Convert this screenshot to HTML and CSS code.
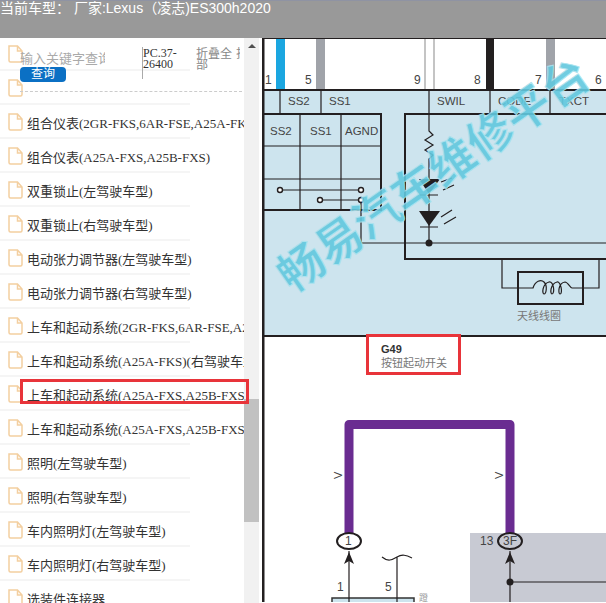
FILE: index.html
```html
<!DOCTYPE html>
<html>
    <head>
        <meta name="viewport" content="width=device-width, initial-scale=1">
        <link rel="stylesheet" href="styles.css">
    </head>
    <body>
        <div class="top_bar">当前车型： 厂家:Lexus（凌志)ES300h2020</div>

        <div class="main">
            <!-- Left tree of circuit names -->
            <div class="side">
                <ul id="circuitList" class="circuit_list"></ul>

                <div class="search_box">
                    <div class="search_left">
                        <div class="search_input">输入关键字查询</div>
                        <button class="search_btn">查询</button>
                    </div>
                    <div class="search_code">PC.37-26400</div>
                    <div class="search_fold">折叠全部</div>
                    <div class="search_more">折</div>
                </div>

                <div class="red_mark"></div>

                <div class="scroll_track">
                    <div class="scroll_up"></div>
                    <div class="scroll_thumb"></div>
                </div>
            </div>

            <!-- Circuit diagram -->
            <svg class="diagram" viewBox="262 39 344 564" width="344" height="564">
                <rect x="262" y="39" width="344" height="564" fill="#fff"/>

                <!-- wires coming in from above -->
                <rect x="276" y="39" width="9" height="52" fill="#1ba6e0"/>
                <rect x="316" y="39" width="9" height="52" fill="#a0a3a9"/>
                <rect x="424" y="39" width="2" height="52" fill="#c4c4c4"/>
                <rect x="433" y="39" width="2" height="52" fill="#c4c4c4"/>
                <rect x="486" y="39" width="8" height="52" fill="#231f20"/>
                <rect x="546" y="39" width="9" height="52" fill="#a0a3a9"/>
                <g class="pin_text">
                    <text x="265" y="85">1</text>
                    <text x="305" y="85">5</text>
                    <text x="414" y="85">9</text>
                    <text x="474" y="85">8</text>
                    <text x="535" y="85">7</text>
                    <text x="595" y="85">6</text>
                </g>

                <!-- blue block -->
                <rect x="264" y="91" width="342" height="246" fill="#cde4ee"/>
                <g class="line_thick">
                    <path d="M264 91H606"/>
                    <path d="M264 337H606"/>
                    <path d="M264 115H381V211H264"/>
                    <path d="M606 115H405V260H606"/>
                </g>
                <g class="line">
                    <path d="M280 91V115M321 91V115M429 91V115M490 91V115M550 91V115"/>
                    <path d="M300 115V211M341 115V211M264 147H381M264 180H381"/>
                    <path d="M283 191H358M323 201H358"/>
                    <path d="M361 204V244H606"/>
                    <path d="M429 115V132L433 136 425 141 433 146 425 151 433 156 429 160V244"/>
                    <path d="M502 260V289H518M583 289H599V260"/>
                    <path d="M420 196H438M420 228H438"/>
                    <path d="M441 183L452 179M443 191L454 186M441 218L452 211M444 225L456 218"/>
                </g>
                <g class="pin_hole">
                    <circle cx="280" cy="191" r="2.5"/>
                    <circle cx="361" cy="191" r="2.5"/>
                    <circle cx="320" cy="201" r="2.5"/>
                    <circle cx="361" cy="201" r="2.5"/>
                </g>
                <path d="M419 180H440L429 195Z" fill="#231f20"/>
                <path d="M419 212H440L429 227Z" fill="#231f20"/>
                <circle cx="429" cy="244" r="3.5" fill="#231f20"/>

                <g class="box_text">
                    <text x="288" y="106">SS2</text>
                    <text x="329" y="106">SS1</text>
                    <text x="437" y="106">SWIL</text>
                    <text x="498" y="106">CODE</text>
                    <text x="559" y="106">TXCT</text>
                    <text x="270" y="136">SS2</text>
                    <text x="310" y="136">SS1</text>
                    <text x="345" y="136">AGND</text>
                </g>

                <!-- antenna coil -->
                <rect x="518" y="273" width="65" height="32" class="line_thick"/>
                <path class="line" d="M518 289H533C535 282 541 280 544 283 548 287 546 295 544 295 542 295 542 285 549 283 554 282 555 295 552 295 550 295 550 285 557 283 561 282 563 295 560 295 558 295 558 284 565 283 568 283 570 289 572 289H583"/>
                <text x="517" y="321" class="cn_text">天线线圈</text>

                <!-- connector name -->
                <text x="381" y="354" class="conn_name">G49</text>
                <text x="381" y="368" class="cn_text">按钮起动开关</text>
                <rect x="367.5" y="336.5" width="92" height="38" class="red_box"/>

                <!-- purple wire -->
                <path class="wire_purple" d="M349 534V425.500H510V534"/>
                <g class="wire_letter">
                    <text transform="translate(342 480) rotate(-90)">V</text>
                    <text transform="translate(503 480) rotate(-90)">V</text>
                </g>

                <!-- lower connectors -->
                <rect x="470" y="534" width="136" height="69" fill="#c8cad3"/>
                <rect x="332" y="599" width="82" height="6" fill="#cde4ee" stroke="#333" stroke-width="1.500"/>
                <path class="line" d="M349 552V603M510 552V603M510 583H606M397 558V603M382 558C388 563 392 561 397 558 402 555 406 556 412 559"/>
                <circle cx="510" cy="583" r="3.500" fill="#231f20"/>
                <path d="M349 553L354 565 349 562 344 565Z" fill="#231f20"/>
                <path d="M510 553L515 565 510 562 505 565Z" fill="#231f20"/>
                <ellipse cx="349" cy="542" rx="12" ry="8" fill="#fff" stroke="#231f20" stroke-width="2"/>
                <ellipse cx="510" cy="542" rx="12" ry="8" fill="#c8cad3" stroke="#231f20" stroke-width="2"/>
                <g class="pin_text">
                    <text x="345" y="546">1</text>
                    <text x="503" y="546">3F</text>
                    <text x="480" y="546">13</text>
                    <text x="337" y="592">1</text>
                    <text x="385" y="592">5</text>
                </g>
                <text x="419" y="602" class="cn_small">蹬</text>

                <!-- watermark -->
                <text class="watermark" transform="translate(292 295) rotate(-35)">畅易汽车维修平台</text>

                <rect x="262" y="39" width="2.500" height="564" fill="#231f20"/>
                <rect x="262" y="39" width="344" height="1" fill="#231f20"/>
            </svg>
        </div>

        <script>
            var names = [
                "",
                "",
                "组合仪表(2GR-FKS,6AR-FSE,A25A-FKS)",
                "组合仪表(A25A-FXS,A25B-FXS)",
                "双重锁止(左驾驶车型)",
                "双重锁止(右驾驶车型)",
                "电动张力调节器(左驾驶车型)",
                "电动张力调节器(右驾驶车型)",
                "上车和起动系统(2GR-FKS,6AR-FSE,A25A-FKS)",
                "上车和起动系统(A25A-FKS)(右驾驶车型)",
                "上车和起动系统(A25A-FXS,A25B-FXS)(左驾驶车型)",
                "上车和起动系统(A25A-FXS,A25B-FXS)(右驾驶车型)",
                "照明(左驾驶车型)",
                "照明(右驾驶车型)",
                "车内照明灯(左驾驶车型)",
                "车内照明灯(右驾驶车型)",
                "选装件连接器"
            ];
            var fileIcon = '<svg class="file_icon" viewBox="0 0 15 18" width="15" height="18">'
                + '<path d="M1 1H9.500L14 6V15.500Q14 17 12.500 17H2.500Q1 17 1 15.500Z M9.500 1V6H14" fill="none" stroke="#f3cfa0" stroke-width="1.500"/></svg>';
            var list = document.getElementById("circuitList");
            for (var i = 0; i < names.length; i++) {
                var row = document.createElement("li");
                row.innerHTML = fileIcon + '<span class="circuit_name">' + names[i] + '</span>';
                list.appendChild(row);
            }
        </script>
    </body>
</html>
```

FILE: styles.css
```css
html, body {
  margin: 0;
  height: 100%;
  overflow: hidden;
}

body {
  font-family: "Liberation Serif", "Noto Sans CJK SC", serif;
  background-color: #fff;
}

.top_bar {
  height: 38px;
  box-sizing: border-box;
  border-top: 1px solid #8f93a3;
  background-color: #999;
  color: #fff;
  font-family: "Liberation Sans", "Noto Sans CJK SC", sans-serif;
  font-size: 14px;
  line-height: 15px;
  white-space: nowrap;
}

.main {
  display: flex;
  height: 565px;
}

.side {
  position: relative;
  flex: 0 0 262px;
  overflow: hidden;
  background-color: #fff;
}

.circuit_list {
  list-style: none;
  margin: -1px 0 0 0;
  padding: 0;
  width: 244px;
  overflow: hidden;
}

.circuit_list li {
  position: relative;
  display: flex;
  align-items: center;
  height: 34px;
  padding-left: 8px;
  box-sizing: border-box;
  white-space: nowrap;
}

.circuit_list li::after {
  content: "";
  position: absolute;
  left: 0;
  bottom: 0;
  width: 190px;
  height: 2px;
  background-color: #f5f5f5;
}

.file_icon {
  flex: 0 0 15px;
}

.circuit_name {
  margin-left: 4px;
  font-size: 13px;
  color: #333;
}

/* search box lies over the first rows of the tree */
.search_box {
  position: absolute;
  left: 20px;
  top: 9px;
  width: 222px;
  height: 44px;
  display: flex;
  overflow: hidden;
  border-bottom: 1px dashed #ccc;
}

.search_left {
  flex: 0 0 122px;
  position: relative;
}

.search_input {
  width: 85px;
  overflow: hidden;
  white-space: nowrap;
  margin-top: 4px;
  font-size: 13px;
  line-height: 16px;
  color: #aaa;
}

.search_btn {
  display: block;
  width: 46px;
  height: 15px;
  margin-top: 0;
  padding: 0;
  border: none;
  border-radius: 4px;
  background-color: #0b70c4;
  color: #fff;
  font-family: inherit;
  font-size: 12px;
  line-height: 15px;
}

.search_code {
  flex: 0 0 54px;
  height: 32px;
  box-sizing: border-box;
  border-left: 1px solid #aaa;
  font-size: 12px;
  line-height: 11px;
  padding-top: 1px;
  color: #333;
}

.search_fold {
  flex: 0 0 40px;
  width: 40px;
  font-size: 12px;
  line-height: 11px;
  padding-top: 2px;
  color: #888;
}

.search_more {
  flex: 0 0 4px;
  overflow: hidden;
  font-size: 12px;
  line-height: 11px;
  padding-top: 2px;
  color: #888;
}

.red_mark {
  position: absolute;
  left: 20px;
  top: 341px;
  width: 229px;
  height: 25px;
  box-sizing: border-box;
  border: 3px solid #e8343a;
}

.scroll_track {
  position: absolute;
  left: 244px;
  top: 0;
  bottom: 0;
  width: 15px;
  background-color: #f1f1f1;
}

.scroll_up {
  width: 0;
  height: 0;
  margin: 6px auto 0 auto;
  border-left: 4px solid transparent;
  border-right: 4px solid transparent;
  border-bottom: 4px solid #505050;
}

.scroll_thumb {
  position: absolute;
  left: 0;
  top: 361px;
  width: 15px;
  height: 123px;
  background-color: #c1c1c1;
}

.scroll_track {
  z-index: 0;
}

.red_mark {
  z-index: 1;
}

.diagram {
  display: block;
  flex: 0 0 344px;
}

.line {
  fill: none;
  stroke: #231f20;
  stroke-width: 1.2;
}

.line_thick {
  fill: none;
  stroke: #231f20;
  stroke-width: 2;
}

.pin_hole circle {
  fill: #fff;
  stroke: #231f20;
  stroke-width: 1.4;
}

.pin_text text,
.box_text text {
  font-family: "Liberation Sans", sans-serif;
  font-size: 12px;
  fill: #444;
}

.box_text text {
  font-size: 11.5px;
}

.cn_text {
  font-family: "Liberation Serif", "Noto Sans CJK SC", serif;
  font-size: 11px;
  fill: #777;
}

.cn_small {
  font-family: "Noto Sans CJK SC", sans-serif;
  font-size: 9px;
  fill: #999;
}

.conn_name {
  font-family: "Liberation Sans", sans-serif;
  font-size: 11px;
  font-weight: bold;
  fill: #333;
}

.red_box {
  fill: none;
  stroke: #e8343a;
  stroke-width: 3;
}

.wire_purple {
  fill: none;
  stroke: #6a2c91;
  stroke-width: 9;
  stroke-linejoin: round;
}

.wire_letter text {
  font-family: "Liberation Sans", sans-serif;
  font-size: 11px;
  fill: #444;
}

.watermark {
  font-family: "Noto Sans CJK SC", sans-serif;
  font-size: 46px;
  font-weight: bold;
  fill: #62c8de;
  stroke: #a9e2ee;
  stroke-width: 1;
  opacity: 0.9;
}
```
